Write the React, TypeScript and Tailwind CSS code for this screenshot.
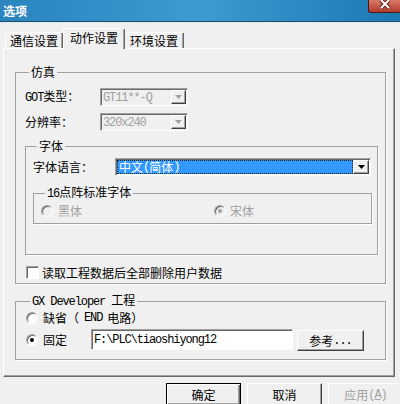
import React from "react";

// half-width latin text, like SimSun's fixed-width ascii
const M = ({ children }: { children: React.ReactNode }) => (
  <span className="font-['Liberation_Mono',monospace] text-[12px] tracking-[-1.1px]">
    {children}
  </span>
);

const raised =
  "border border-t-white border-l-white border-r-[#404040] border-b-[#404040] bg-[#f0f0f0] shadow-[inset_-1px_-1px_0_#a0a0a0]";
const sunken =
  "border border-t-[#a0a0a0] border-l-[#a0a0a0] border-r-white border-b-white shadow-[inset_1px_1px_0_#696969]";

const Arrow = ({ disabled }: { disabled?: boolean }) => (
  <svg width="7" height="4" viewBox="0 0 7 4">
    <path d="M0 0h7L3.5 4z" fill={disabled ? "#a0a0a0" : "#000"} />
  </svg>
);

const Group = ({
  label,
  className,
  children,
}: {
  label: React.ReactNode;
  className?: string;
  children: React.ReactNode;
}) => (
  <fieldset
    className={`border border-[#a0a0a0] shadow-[1px_1px_0_#fff] ${className ?? ""}`}
  >
    <legend className="ml-[4px] px-[2px] leading-[12px]">{label}</legend>
    {children}
  </fieldset>
);

const Radio = ({
  checked,
  disabled,
}: {
  checked?: boolean;
  disabled?: boolean;
}) => (
  <span
    className={`flex h-[12px] w-[12px] shrink-0 items-center justify-center rounded-full border border-t-[#a0a0a0] border-l-[#a0a0a0] border-r-white border-b-white shadow-[inset_1px_1px_0_#696969] ${
      disabled ? "bg-[#f0f0f0]" : "bg-white"
    }`}
  >
    {checked && (
      <span
        className={`h-[4px] w-[4px] rounded-full ${
          disabled ? "bg-[#a0a0a0]" : "bg-black"
        }`}
      />
    )}
  </span>
);

const DisabledSelect = ({ value }: { value: string }) => (
  <div className={`flex h-[18px] w-[88px] items-center bg-[#f0f0f0] ${sunken}`}>
    <span className="flex-1 pl-[2px] text-[#a0a0a0]">
      <M>{value}</M>
    </span>
    <span
      className={`mr-px flex h-[14px] w-[15px] items-center justify-center ${raised}`}
    >
      <Arrow disabled />
    </span>
  </div>
);

const App = () => {
  return (
    <div className="h-[404px] w-[400px] overflow-hidden bg-[#f0f0f0] font-['Noto_Sans_CJK_SC',sans-serif] text-[12px] leading-[12px] text-black">
      {/* TITLE BAR */}
      <div className="flex h-[21px] justify-between bg-gradient-to-r from-[#2a84be] via-[#3c9bd0] to-[#1b78b3]">
        <span className="pl-[3px] pt-[5px] font-bold text-white">选项</span>
        <div className="flex h-[13px] w-[32px] justify-center rounded-bl-[3px] border border-t-0 border-r-0 border-[#4a1c14] bg-gradient-to-b from-[#d97a6b] to-[#b13a2b]">
          <svg width="12" height="9" viewBox="0 0 12 9">
            <path d="M2 0l8 8M10 0L2 8" stroke="#5a2018" strokeWidth="4" />
            <path d="M2 0l8 8M10 0L2 8" stroke="#fff" strokeWidth="2" />
          </svg>
        </div>
      </div>
      <div className="h-px bg-[#1d4f6c]" />
      <div className="h-px bg-[#d9ebf5]" />

      {/* TABS */}
      <div className="mt-[5px] flex h-[20px] items-end pl-[5px]">
        <div className="flex h-[16px] w-[58px] items-center justify-center rounded-t-[2px] border-l border-t border-r border-l-white border-t-white border-r-[#696969] shadow-[inset_-1px_0_0_#a0a0a0]">
          通信设置
        </div>
        <div className="relative z-10 -mb-px flex h-[21px] w-[62px] items-center justify-center rounded-t-[2px] border-l border-t border-r border-l-white border-t-white border-r-[#696969] bg-[#f0f0f0] pb-[2px] shadow-[inset_-1px_0_0_#a0a0a0]">
          动作设置
        </div>
        <div className="flex h-[16px] w-[59px] items-center justify-center rounded-t-[2px] border-t border-r border-t-white border-r-[#696969] shadow-[inset_-1px_0_0_#a0a0a0]">
          环境设置
        </div>
      </div>

      {/* PANEL */}
      <div className="ml-[3px] h-[329px] w-[392px] border border-t-white border-l-white border-r-[#696969] border-b-[#696969] pl-[11px] pt-[17px] shadow-[inset_-1px_-1px_0_#a0a0a0]">
        <Group label="仿真" className="w-[371px] pb-[4px] pl-[9px]">
          <div className="mt-[10px] flex h-[18px] items-center">
            <span className="w-[75px]">
              <M>GOT</M>类型：
            </span>
            <DisabledSelect value="GT11**-Q" />
          </div>
          <div className="mt-[7px] flex h-[18px] items-center">
            <span className="w-[75px]">分辨率：</span>
            <DisabledSelect value="320x240" />
          </div>

          <Group label="字体" className="mt-[9px] w-[353px] pb-[30px] pl-[7px]">
            <div className="mt-[6px] flex h-[18px] items-center">
              <span className="w-[82px]">字体语言：</span>
              <div className={`flex h-[18px] w-[256px] items-center bg-white ${sunken}`}>
                <span className="ml-px flex h-[14px] flex-1 items-center border border-dotted border-[#222] bg-[#3399ff] pl-px text-white">
                  中文<M>(</M>简体<M>)</M>
                </span>
                <span
                  className={`mr-px flex h-[14px] w-[16px] items-center justify-center ${raised}`}
                >
                  <Arrow />
                </span>
              </div>
            </div>

            <Group
              label={
                <>
                  <M>16</M>点阵标准字体
                </>
              }
              className="mt-[10px] w-[339px] pb-[6px] pl-[7px]"
            >
              <div className="mt-[5px] flex h-[12px] items-center text-[#a0a0a0]">
                <span className="flex w-[173px] items-center gap-[5px]">
                  <Radio disabled />
                  黑体
                </span>
                <span className="flex items-center gap-[4px]">
                  <Radio checked disabled />
                  宋体
                </span>
              </div>
            </Group>
          </Group>

          <div className="ml-px mt-[11px] flex h-[13px] items-center gap-[3px]">
            <span className={`h-[13px] w-[13px] bg-white ${sunken}`} />
            读取工程数据后全部删除用户数据
          </div>
        </Group>

        <Group
          label={
            <>
              <M>GX Developer </M>工程
            </>
          }
          className="mt-[10px] w-[371px] pb-[9px] pl-[10px]"
        >
          <div className="mt-[4px] flex h-[12px] items-center gap-[5px]">
            <Radio />
            缺省（<M>END</M>电路）
          </div>
          <div className="mt-[5px] flex h-[21px] items-center">
            <Radio checked />
            <span className="ml-[5px] w-[48px]">固定</span>
            <div className={`flex h-[21px] w-[202px] items-center bg-white pl-[2px] ${sunken}`}>
              <M>F:\PLC\tiaoshiyong12</M>
            </div>
            <button
              className={`ml-[4px] mt-[2px] flex h-[21px] w-[67px] items-center justify-center ${raised}`}
            >
              参考<M>...</M>
            </button>
          </div>
        </Group>
      </div>

      {/* DIALOG BUTTONS */}
      <div className="mt-[6px] flex gap-[6px] pl-[166px]">
        <button className="flex h-[23px] w-[75px] shrink-0 items-center justify-center border border-black bg-[#f0f0f0] shadow-[inset_1px_1px_0_#fff,inset_-1px_-1px_0_#696969,inset_-2px_-2px_0_#a0a0a0]">
          确定
        </button>
        <button
          className={`flex h-[23px] w-[75px] shrink-0 items-center justify-center ${raised}`}
        >
          取消
        </button>
        <button
          className={`flex h-[23px] w-[75px] shrink-0 items-center justify-center text-[#a0a0a0] ${raised}`}
        >
          应用
          <M>
            (<span className="underline">A</span>)
          </M>
        </button>
      </div>
    </div>
  );
};

export default App;
